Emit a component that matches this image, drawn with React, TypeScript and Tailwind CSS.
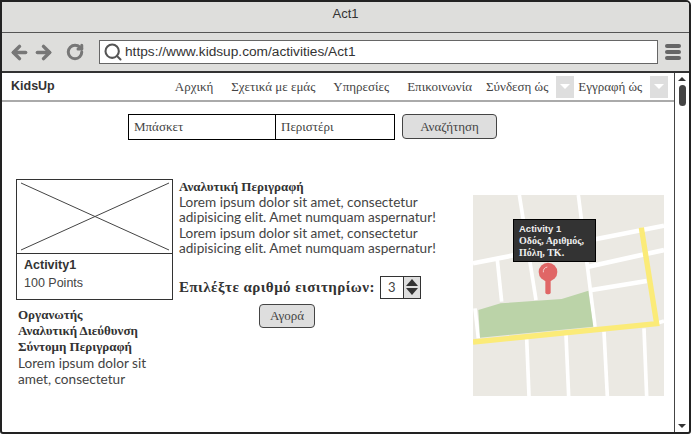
import { ArrowLeft, ArrowRight, RotateCw, Search } from 'lucide-react';

const serif = "font-['Liberation_Serif',serif]";

function Dropdown() {
  return (
    <div className="w-[18px] h-[22px] bg-[#dedede] flex items-center justify-center">
      <div className="w-0 h-0 border-x-[5px] border-x-transparent border-t-[5px] border-t-white" />
    </div>
  );
}

function MapView() {
  return (
    <div className="relative w-[191px] h-[201px] mt-[32px]">
      <svg className="w-full h-full block" viewBox="39 30 573 603">
        <rect x="39" y="30" width="573" height="603" fill="#ebe9e3" />
        <g stroke="#ffffff" fill="none" strokeWidth="11">
          <path d="M178 30L228 345" />
          <path d="M355 30L405 425" />
          <path d="M39 235L612 122" strokeWidth="14" />
          <path d="M385 245L612 195" strokeWidth="14" />
          <path d="M395 315L560 288" strokeWidth="14" />
          <path d="M112 225L125 350" />
          <path d="M45 370L55 460" />
          <path d="M200 460L207 633" />
          <path d="M318 450L326 633" />
          <path d="M432 440L442 633" />
          <path d="M552 430L560 633" />
          <path d="M590 415L612 408" />
        </g>
        <path d="M55 375L122 355L305 342L385 317L400 425L60 458Z" fill="#bbd3a8" />
        <path d="M39 471L590 416L544 128" fill="none" stroke="#fbeb78" strokeWidth="16" />
        <rect x="256" y="280" width="16" height="48" rx="6" fill="#e06666" />
        <circle cx="264" cy="261" r="28" fill="#e06666" />
        <path d="M250 262a15 15 0 0 1 12-16" fill="none" stroke="#f6d0d0" strokeWidth="3" />
      </svg>
      <div className="absolute left-[40px] top-[24px] w-[83px] h-[43px] bg-[#333333] border border-black px-[5px] py-[3px] text-[10px] leading-[12px] font-bold text-[#eeeeee]">
        <div className="font-['Liberation_Sans',sans-serif] text-[9.5px]">Activity 1</div>
        <div className="font-['Liberation_Serif',serif]">Οδός, Αριθμός, Πόλη, ΤΚ.</div>
      </div>
    </div>
  );
}

export default function App() {
  return (
    <div className="w-[691px] h-[434px] bg-white border-2 border-[#222222] rounded-tr-[5px] rounded-b-[3px] overflow-hidden flex flex-col text-[#444444] font-['Lato',sans-serif]">
      <div className="h-[31px] shrink-0 bg-[#dededc] border-b border-[#555555] flex items-center justify-center pb-[7px] text-[13px] text-[#333333] font-['Liberation_Sans',sans-serif]">
        Act1
      </div>
      <div className="h-[40px] shrink-0 bg-[#dededc] border-b-2 border-[#333333] flex items-center pl-[7px] pr-[7px]">
        <div className="flex items-center gap-[3px] text-[#777777]">
          <ArrowLeft size={21} strokeWidth={4} />
          <ArrowRight size={21} strokeWidth={4} />
          <RotateCw size={18} strokeWidth={4} className="ml-[9px]" />
        </div>
        <div className="ml-[15px] w-[559px] h-[24px] bg-white border border-[#666666] flex items-center pl-[3px] gap-[2px] text-[13.7px] text-[#333333] font-['Liberation_Sans',sans-serif]">
          <Search size={20} strokeWidth={2.5} className="text-[#555555]" />
          <span>https://www.kidsup.com/activities/Act1</span>
        </div>
        <div className="ml-[7px] w-[16px] flex flex-col gap-[2px]">
          <div className="h-[4px] rounded-full bg-[#666666]" />
          <div className="h-[4px] rounded-full bg-[#666666]" />
          <div className="h-[4px] rounded-full bg-[#666666]" />
        </div>
      </div>
      <div className="flex-1 flex min-h-0">
        <div className="flex-1 min-w-0 flex flex-col">
          <div className={`h-[29px] shrink-0 border-b-2 border-[#aaaaaa] flex items-center pl-[9px] text-[13px] ${serif}`}>
            <span className="font-['Liberation_Sans',sans-serif] font-bold text-[12.5px] text-[#333333]">KidsUp</span>
            <div className="ml-[120px] flex items-center gap-[18px]">
              <span>Αρχική</span>
              <span>Σχετικά με εμάς</span>
              <span>Υπηρεσίες</span>
              <span>Επικοινωνία</span>
            </div>
            <span className="ml-[14px]">Σύνδεση ώς</span>
            <div className="ml-[8px]"><Dropdown /></div>
            <span className="ml-[4px]">Εγγραφή ώς</span>
            <div className="ml-[8px]"><Dropdown /></div>
          </div>
          <div className="flex gap-[7px] mt-[12px] pl-[126px]">
            <div className={`flex h-[26px] w-[267px] border border-black text-[13px] text-[#444444] ${serif}`}>
              <div className="w-[147px] border-r border-black px-[5px] flex items-center">Μπάσκετ</div>
              <div className="flex-1 px-[5px] flex items-center">Περιστέρι</div>
            </div>
            <div className={`w-[95px] h-[25px] bg-[#dedede] border border-[#444444] rounded-[4px] flex items-center justify-center text-[13px] text-[#444444] ${serif}`}>
              Αναζήτηση
            </div>
          </div>
          <div className="flex mt-[23px] pl-[14px]">
            <div className="w-[157px] shrink-0 mt-[16px]">
              <div className="h-[121px] border border-[#333333] flex flex-col">
                <svg className="w-full h-[74px] block border-b border-[#333333]" viewBox="0 0 155 73" preserveAspectRatio="none">
                  <path d="M4 3L152 70M4 70L152 3" stroke="#444444" strokeWidth="1" fill="none" />
                </svg>
                <div className="flex-1 px-[7px] pt-[2px] text-[12.5px] leading-[18px] font-['Liberation_Sans',sans-serif]">
                  <div className="font-bold text-[#333333]">Activity1</div>
                  <div>100 Points</div>
                </div>
              </div>
              <div className="mt-[7px] pl-[2px] text-[13.6px] leading-[16px]">
                <div className={`font-bold text-[13px] text-[#333333] ${serif}`}>Οργανωτής</div>
                <div className={`font-bold text-[13px] text-[#333333] ${serif}`}>Αναλυτική Διεύθυνση</div>
                <div className={`font-bold text-[13px] text-[#333333] ${serif}`}>Σύντομη Περιγραφή</div>
                <div>Lorem ipsum dolor sit amet, consectetur</div>
              </div>
            </div>
            <div className="w-[290px] shrink-0 pl-[6px] mt-[16px]">
              <div className="text-[13.6px] leading-[15.6px]">
                <div className={`font-bold text-[13px] text-[#333333] ${serif}`}>Αναλυτική Περιγραφή</div>
                <div>Lorem ipsum dolor sit amet, consectetur</div>
                <div>adipisicing elit. Amet numquam aspernatur!</div>
                <div>Lorem ipsum dolor sit amet, consectetur</div>
                <div>adipisicing elit. Amet numquam aspernatur!</div>
              </div>
              <div className="flex items-center mt-[19px]">
                <span className={`font-bold text-[15px] tracking-[0.45px] text-[#333333] ${serif}`}>Επιλέξτε αριθμό εισιτηρίων:</span>
                <div className="ml-[5px] w-[41px] h-[23px] border border-[#333333] flex text-[13px]">
                  <div className="flex-1 flex items-center justify-center">3</div>
                  <div className="w-[17px] bg-[#dedede] border-l border-[#333333] flex flex-col items-center justify-center gap-[2px]">
                    <div className="w-0 h-0 border-x-[6px] border-x-transparent border-b-[7px] border-b-[#333333]" />
                    <div className="w-0 h-0 border-x-[6px] border-x-transparent border-t-[7px] border-t-[#333333]" />
                  </div>
                </div>
              </div>
              <div className={`ml-[80px] mt-[5px] w-[56px] h-[24px] bg-[#dedede] border border-[#444444] rounded-[4px] flex items-center justify-center text-[13px] text-[#444444] ${serif}`}>
                Αγορά
              </div>
            </div>
            <div className="ml-[10px]">
              <MapView />
            </div>
          </div>
        </div>
        <div className="w-[15px] shrink-0 border-l border-[#444444] flex flex-col items-center justify-between py-[4px]">
          <div className="flex flex-col items-center gap-[4px]">
            <div className="w-0 h-0 border-x-[4px] border-x-transparent border-b-[4px] border-b-[#333333]" />
            <div className="w-[7px] h-[21px] rounded-full bg-[#444444]" />
          </div>
          <div className="w-0 h-0 border-x-[4px] border-x-transparent border-t-[4px] border-t-[#333333]" />
        </div>
      </div>
    </div>
  );
}
